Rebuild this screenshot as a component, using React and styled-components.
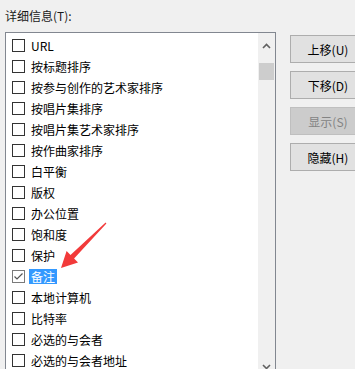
import React from 'react';
import styled, { createGlobalStyle } from 'styled-components';

const GlobalStyle = createGlobalStyle`
  html, body {
    margin: 0;
    padding: 0;
    background: #f0f0f0;
    overflow: hidden;
  }
  body {
    font-family: "Noto Sans CJK SC", "Microsoft YaHei", sans-serif;
    font-size: 12px;
    color: #000;
  }
`;

const Dialog = styled.div`
  position: relative;
  width: 355px;
  height: 369px;
  overflow: hidden;
  padding: 0 0 0 5px;
  box-sizing: border-box;
  display: flex;
  gap: 14px;
`;

const LeftColumn = styled.div`
  display: flex;
  flex-direction: column;
  width: 271px;
  flex: none;
`;

const Caption = styled.div`
  height: 34px;
  line-height: 32px;
  color: #1a1a1a;
`;

const ListBox = styled.div`
  display: flex;
  height: 344px;
  border: 1px solid #828790;
  background: #fff;
  box-sizing: border-box;
  flex: none;
`;

const Items = styled.ul`
  list-style: none;
  margin: 0;
  padding: 2px 0 0 6px;
  flex: 1;
`;

const Item = styled.li`
  display: flex;
  align-items: center;
  height: 21px;
  gap: 4px;
`;

const Box = styled.span`
  width: 13px;
  height: 13px;
  box-sizing: border-box;
  border: 1px solid ${(p) => (p.$checked ? '#7a7a7a' : '#333')};
  background: #fff;
  display: flex;
  align-items: center;
  justify-content: center;
  flex: none;
`;

const Label = styled.span`
  line-height: 15px;
  padding: 0 2px;
  white-space: nowrap;
  background: ${(p) => (p.$selected ? '#3399ff' : 'transparent')};
  color: ${(p) => (p.$selected ? '#fff' : '#000')};
`;

const ScrollBar = styled.div`
  width: 17px;
  background: #f0f0f0;
  display: flex;
  flex-direction: column;
  align-items: center;
  flex: none;
`;

const ScrollArrow = styled.div`
  height: 17px;
  width: 17px;
  display: flex;
  align-items: center;
  justify-content: center;
  margin-top: ${(p) => (p.$down ? 'auto' : '0')};
  padding-top: ${(p) => (p.$down ? '0' : '4px')};
`;

const Thumb = styled.div`
  width: 15px;
  height: 17px;
  margin-top: 9px;
  margin-left: -1px;
  background: #cdcdcd;
`;

const Buttons = styled.div`
  display: flex;
  flex-direction: column;
  gap: 8px;
  padding-top: 35px;
`;

const Button = styled.button`
  width: 84px;
  height: 28px;
  box-sizing: border-box;
  border: 1px solid ${(p) => (p.disabled ? '#bfbfbf' : '#adadad')};
  background: ${(p) => (p.disabled ? '#cccccc' : '#e1e1e1')};
  color: ${(p) => (p.disabled ? '#838383' : '#000')};
  font: inherit;
  font-size: 12px;
  padding: 0 8px 0 0;
  text-align: center;
`;

const Pointer = styled.svg`
  position: absolute;
  left: 0;
  top: 0;
  pointer-events: none;
`;

const fields = [
  'URL',
  '按标题排序',
  '按参与创作的艺术家排序',
  '按唱片集排序',
  '按唱片集艺术家排序',
  '按作曲家排序',
  '白平衡',
  '版权',
  '办公位置',
  '饱和度',
  '保护',
  '备注',
  '本地计算机',
  '比特率',
  '必选的与会者',
  '必选的与会者地址',
];

function Chevron({ down }) {
  return (
    <svg width="9" height="6" viewBox="0 0 9 6">
      <path
        d={down ? 'M1 1 L4.5 4.5 L8 1' : 'M1 5 L4.5 1.5 L8 5'}
        fill="none"
        stroke="#606060"
        strokeWidth="1.6"
      />
    </svg>
  );
}

export default function App() {
  return (
    <>
      <GlobalStyle />
      <Dialog>
        <LeftColumn>
          <Caption>详细信息(T):</Caption>
          <ListBox>
            <Items>
              {fields.map((f) => {
                const on = f === '备注';
                return (
                  <Item key={f}>
                    <Box $checked={on}>
                      {on && (
                        <svg width="11" height="11" viewBox="0 0 11 11">
                          <path d="M1.5 5.5 L4 8 L9.5 2.5" fill="none" stroke="#555" strokeWidth="1.2" />
                        </svg>
                      )}
                    </Box>
                    <Label $selected={on}>{f}</Label>
                  </Item>
                );
              })}
            </Items>
            <ScrollBar>
              <ScrollArrow><Chevron /></ScrollArrow>
              <Thumb />
              <ScrollArrow $down><Chevron down /></ScrollArrow>
            </ScrollBar>
          </ListBox>
        </LeftColumn>
        <Buttons>
          <Button>上移(U)</Button>
          <Button>下移(D)</Button>
          <Button disabled>显示(S)</Button>
          <Button>隐藏(H)</Button>
        </Buttons>
        <Pointer width="355" height="369" viewBox="0 0 355 369">
          <polygon
            points="61,268 78,262.4 74.1,258.5 106.4,223.4 105.6,222.6 70.5,254.9 66.6,251"
            fill="#f23a3a"
          />
        </Pointer>
      </Dialog>
    </>
  );
}
